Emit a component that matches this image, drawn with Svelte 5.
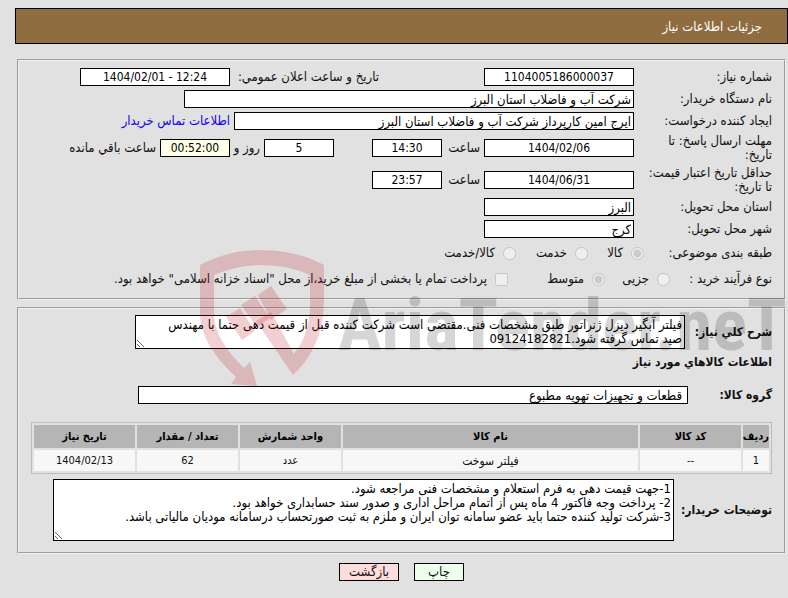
<script lang="ts">
  type Item = { row: string; code: string; name: string; unit: string; count: string; date: string };

  const items: Item[] = [
    { row: '1', code: '--', name: 'فیلتر سوخت', unit: 'عدد', count: '62', date: '1404/02/13' },
  ];

  let subject = 'goods';
  let process = 'medium';
  let description =
    'فیلتر آبگیر دیزل ژنراتور طبق مشخصات فنی.مقتضی است شرکت کننده قبل از قیمت دهی حتما با مهندس صید تماس گرفته شود.09124182821';
  let notes = [
    '1-جهت قیمت دهی به فرم استعلام و مشخصات فنی مراجعه شود.',
    '2- پرداخت وجه فاکتور 4 ماه پس از اتمام مراحل اداری و صدور سند حسابداری خواهد بود.',
    '3-شرکت تولید کننده حتما باید عضو سامانه توان ایران و ملزم به ثبت صورتحساب درسامانه مودیان مالیاتی باشد.',
  ].join('\n');
</script>

<main dir="rtl">
  <h1>جزئیات اطلاعات نیاز</h1>

  <section class="panel info">
    <div class="row">
      <label class="name" for="number">شماره نیاز:</label>
      <input id="number" class="num w-date" value="1104005186000037" readonly />
      <label class="announce" for="announce">تاریخ و ساعت اعلان عمومي:</label>
      <input id="announce" class="num w-date" dir="ltr" value="1404/02/01 - 12:24" readonly />
    </div>
    <div class="row">
      <label class="name" for="org">نام دستگاه خریدار:</label>
      <input id="org" class="w-org" value="شرکت آب و فاضلاب استان البرز" readonly />
    </div>
    <div class="row">
      <label class="name" for="creator">ایجاد کننده درخواست:</label>
      <input id="creator" class="w-creator" value="ایرج امین کارپرداز شرکت آب و فاضلاب استان البرز" readonly />
      <a href="#contact">اطلاعات تماس خریدار</a>
    </div>
    <div class="row">
      <label class="name" for="deadline">مهلت ارسال پاسخ: تا تاریخ:</label>
      <input id="deadline" class="num w-date" value="1404/02/06" readonly />
      <label class="hour" for="deadline-time">ساعت</label>
      <input id="deadline-time" class="num w-time" value="14:30" readonly />
      <input id="days" class="num w-time days" value="5" readonly />
      <label class="day" for="days">روز و</label>
      <input id="left" class="num w-time left" value="00:52:00" readonly />
      <label for="left">ساعت باقي مانده</label>
    </div>
    <div class="row">
      <label class="name" for="validity">حداقل تاریخ اعتبار قیمت: تا تاریخ:</label>
      <input id="validity" class="num w-date" value="1404/06/31" readonly />
      <label class="hour" for="validity-time">ساعت</label>
      <input id="validity-time" class="num w-time" value="23:57" readonly />
    </div>
    <div class="row">
      <label class="name" for="province">استان محل تحویل:</label>
      <input id="province" class="w-date" value="البرز" readonly />
    </div>
    <div class="row">
      <label class="name" for="city">شهر محل تحویل:</label>
      <input id="city" class="w-date" value="کرج" readonly />
    </div>
    <div class="row choices">
      <span class="subject">طبقه بندی موضوعی:</span>
      <label class="goods"><input type="radio" bind:group={subject} value="goods" disabled />کالا</label>
      <label class="service"><input type="radio" bind:group={subject} value="service" disabled />خدمت</label>
      <label><input type="radio" bind:group={subject} value="both" disabled />کالا/خدمت</label>
    </div>
    <div class="row choices">
      <span class="process">نوع فرآیند خرید :</span>
      <label class="small"><input type="radio" bind:group={process} value="small" disabled />جزیی</label>
      <label class="medium"><input type="radio" bind:group={process} value="medium" disabled />متوسط</label>
      <label><input type="checkbox" disabled />پرداخت تمام یا بخشی از مبلغ خرید،از محل "اسناد خزانه اسلامی" خواهد بود.</label>
    </div>
  </section>

  <section class="panel need">
    <div class="row">
      <label class="strong" for="description">شرح کلي نیاز:</label>
      <textarea id="description" class="w-desc" rows="2" bind:value={description} readonly></textarea>
    </div>
    <h2>اطلاعات کالاهاي مورد نیاز</h2>
    <div class="row group">
      <label class="strong" for="group">گروه کالا:</label>
      <input id="group" class="w-desc" value="قطعات و تجهیزات تهویه مطبوع" readonly />
    </div>
    <table>
      <thead>
        <tr>
          <th class="col-row">ردیف</th>
          <th class="col-mid">کد کالا</th>
          <th>نام کالا</th>
          <th class="col-mid">واحد شمارش</th>
          <th class="col-mid">تعداد / مقدار</th>
          <th class="col-mid">تاریخ نیاز</th>
        </tr>
      </thead>
      <tbody>
        {#each items as item}
          <tr>
            <td>{item.row}</td>
            <td>{item.code}</td>
            <td class="text">{item.name}</td>
            <td>{item.unit}</td>
            <td>{item.count}</td>
            <td>{item.date}</td>
          </tr>
        {/each}
      </tbody>
    </table>
    <div class="row">
      <label class="strong wide" for="notes">توضیحات خریدار:</label>
      <textarea id="notes" class="w-notes" rows="4" bind:value={notes} readonly></textarea>
    </div>
  </section>

  <div class="actions">
    <button class="print" type="button">چاپ</button>
    <button class="back" type="button">بازگشت</button>
  </div>

  <div class="watermark" dir="ltr" aria-hidden="true">
    <svg width="124" height="138" viewBox="0 0 124 138">
      <path d="M0 15Q28 0 62 0T124 15V50Q124 96 93 125L56 71L71 62L94 104Q110 84 110 54V25Q88 15 62 15T14 25V66Q15 90 44 118L50 112L57 136L31 134L36 127Q2 96 0 66Z" />
      <path d="M26 67L40 58L55 81L42 90ZM41 55L55 46L70 68L57 77ZM58 45L71 36L87 59L71 70Z" />
    </svg>
    <span>AriaTender.neT</span>
  </div>
</main>

<style>
  :global(body) {
    background: #e1e1e1;
  }
  main {
    position: relative;
    padding: 8px 0 18px 15px;
    overflow: hidden;
    font: 13px/14px "DejaVu Sans Condensed", "DejaVu Sans", sans-serif;
    color: #111;
  }
  h1 {
    margin: 0;
    padding: 11px 25px 9px;
    border: 1px solid #000;
    background: #8f6d41;
    color: #fff;
    font-size: 13px;
    font-weight: normal;
    line-height: 14px;
  }
  .panel {
    border: 2px groove #f0f0f0;
    margin: 0 2px 7px;
    padding: 7px 12px 4px;
  }
  .info { margin-top: 15px; }
  .row {
    display: flex;
    align-items: center;
    margin-bottom: 4px;
    gap: 4px;
  }
  label, a { white-space: nowrap; }
  label.name {
    box-sizing: border-box;
    flex: none;
    width: 134px;
    padding-left: 4px;
    white-space: normal;
  }
  input:not([type]), textarea {
    box-sizing: border-box;
    margin: 0;
    border: 1px solid #000;
    border-radius: 0;
    background: #fff;
    color: #000;
    font: inherit;
  }
  input:not([type]) {
    height: 18px;
    padding: 1px 2px;
  }
  input.num {
    padding: 0 2px;
    font-size: 12px;
    text-align: center;
  }
  textarea { padding: 2px; }
  textarea#description { padding-left: 20px; }
  .w-date { width: 150px; }
  .w-time { width: 70px; }
  .w-org { width: 450px; }
  .w-creator { width: 400px; }
  .w-desc { width: 550px; }
  .w-notes { width: 621px; }
  .announce {
    width: 145px;
    margin-right: 101px;
  }
  a { color: #1500f5; text-decoration: none; }
  .hour { width: 34px; }
  input.days { margin-right: 34px; }
  .day { width: 26px; }
  input.left { background: #ffffe9; }

  .choices { height: 22px; }
  .choices label {
    display: flex;
    align-items: center;
  }
  .choices input {
    flex: none;
    width: 13px;
    height: 13px;
    margin: 0 0 0 8px;
  }
  .subject { width: 124px; }
  .goods { width: 52px; }
  .service { width: 68px; }
  .process { width: 98px; }
  .small { width: 61px; }
  .medium { width: 93px; }

  .need { padding: 6px 12px 7px; }
  .strong {
    width: 83px;
    font-size: 12px;
    font-weight: bold;
  }
  .strong.wide { width: 94px; }
  h2 {
    margin: 6px 0 17px;
    font-size: 12px;
    line-height: 14px;
  }
  .group .strong { width: 80px; }
  input#group { padding: 1px 5px; }
  table {
    width: 100%;
    margin: 18px 0 5px;
    border: 1px solid #bdbdbd;
    border-spacing: 2px;
    table-layout: fixed;
    font-size: 11px;
    text-align: center;
  }
  th, td { padding: 0; }
  th { height: 23px; background: #b5b5b5; color: #000; }
  td { height: 21px; background: #f7f7f7; }
  td.text { font-size: 12px; }
  .col-row { width: 26px; }
  .col-mid { width: 101px; }

  .actions {
    display: flex;
    justify-content: center;
    gap: 15px;
    padding-top: 2px;
  }
  button {
    box-sizing: border-box;
    height: 18px;
    padding: 0;
    border: 1px solid #000;
    font: inherit;
    color: #111;
  }
  .print { width: 50px; background: #ecffec; }
  .back { width: 60px; background: #ffdddd; }

  .watermark {
    position: absolute;
    top: 250px;
    left: 200px;
    display: flex;
    gap: 14px;
    pointer-events: none;
  }
  .watermark svg { fill: rgba(190, 20, 30, 0.2); }
  .watermark span {
    padding-top: 30px;
    color: rgba(0, 0, 0, 0.16);
    font: bold 73px/90px "Liberation Sans Narrow", "Roboto Condensed", Roboto, sans-serif;
  }
</style>
